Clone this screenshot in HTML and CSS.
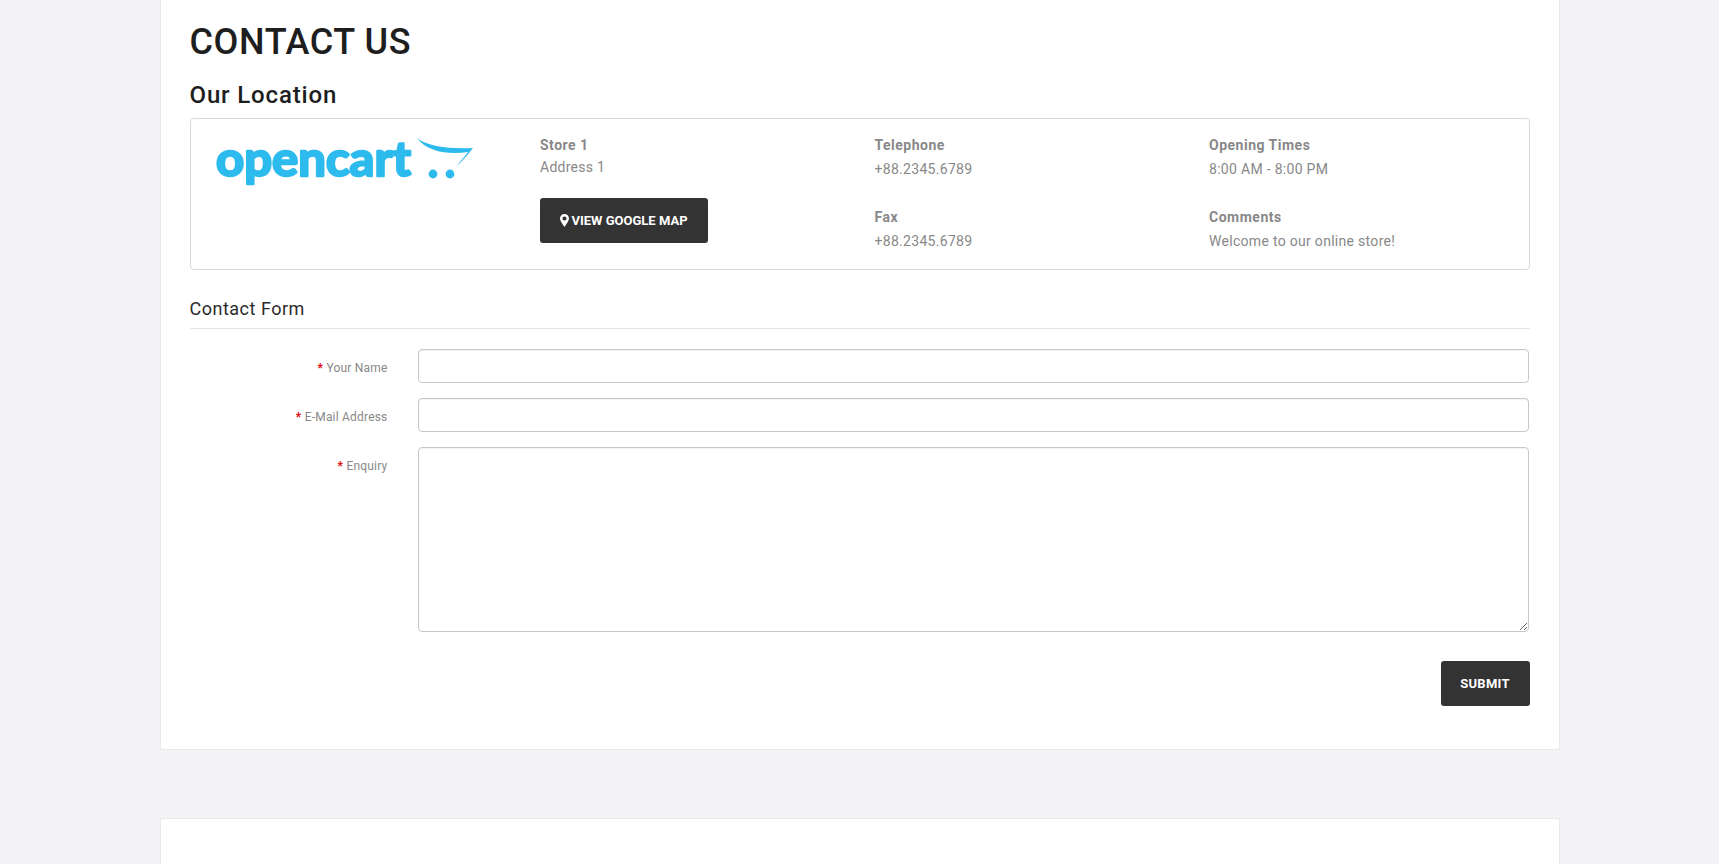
FILE: index.html
```html
<!DOCTYPE html>
<html lang="en">
<head>
    <meta charset="UTF-8">
    <meta name="viewport" content="width=device-width, initial-scale=1.0">
    <title>Contact Us</title>
    <link rel="stylesheet" href="styles.css">
</head>
<body>

    <div class="panel">
        <h1>CONTACT US</h1>
        <h2>Our Location</h2>

        <div class="location-card">
            <div class="loc-col loc-logo">
                <svg class="logo" width="268" height="62" viewBox="0 -10 268 62">
                    <text class="logo-text" x="10" y="38" textLength="195" lengthAdjust="spacingAndGlyphs">opencart</text>
                    <path class="logo-cart" d="M211 0 C222 9 245 11 267 10 C261 18 256 23 250 29 C256 21 260 17 262 14 C243 17 221 14 211 0 Z"/>
                    <circle class="logo-cart" cx="227" cy="36" r="4.4"/>
                    <circle class="logo-cart" cx="244" cy="36" r="4.4"/>
                </svg>
            </div>

            <div class="loc-col">
                <div class="loc-group">
                    <strong>Store 1</strong>
                    <div class="loc-address">Address 1</div>
                </div>
                <a class="btn btn-map" href="#">
                    <svg class="pin" width="9" height="13" viewBox="0 0 9 13">
                        <path fill-rule="evenodd" d="M4.5 0C2 0 0 2 0 4.5 0 6.6 2.9 10.6 4.5 13 6.1 10.6 9 6.6 9 4.5 9 2 7 0 4.5 0ZM4.5 2.4a2.1 2.1 0 1 1 0 4.2 2.1 2.1 0 0 1 0-4.2Z"/>
                    </svg>
                    VIEW GOOGLE MAP
                </a>
            </div>

            <div class="loc-col">
                <div class="loc-group">
                    <strong>Telephone</strong>
                    <div class="loc-value">+88.2345.6789</div>
                </div>
                <div class="loc-group">
                    <strong>Fax</strong>
                    <div class="loc-value">+88.2345.6789</div>
                </div>
            </div>

            <div class="loc-col">
                <div class="loc-group">
                    <strong>Opening Times</strong>
                    <div class="loc-value">8:00 AM - 8:00 PM</div>
                </div>
                <div class="loc-group">
                    <strong>Comments</strong>
                    <div class="loc-value">Welcome to our online store!</div>
                </div>
            </div>
        </div>

        <form class="contact-form">
            <div class="legend">Contact Form</div>

            <div class="form-row">
                <label for="name"><span class="req">*</span> Your Name</label>
                <input type="text" id="name">
            </div>
            <div class="form-row">
                <label for="email"><span class="req">*</span> E-Mail Address</label>
                <input type="text" id="email">
            </div>
            <div class="form-row">
                <label for="enquiry"><span class="req">*</span> Enquiry</label>
                <textarea id="enquiry"></textarea>
            </div>

            <div class="form-actions">
                <button type="button" class="btn btn-submit">SUBMIT</button>
            </div>
        </form>
    </div>

    <div class="panel panel-next"></div>

</body>
</html>
```

FILE: styles.css
```css
/* Global Style */
html, body {
    margin: 0;
    padding: 0;
}

body {
    font-family: Roboto, Arial, sans-serif;
    font-size: 14px;
    color: #888;
    background-color: #f3f3f8;
    overflow: hidden;
    height: 864px;
}

.panel {
    box-sizing: border-box;
    width: 1400px;
    margin: 0 auto;
    padding: 22px 29px 43px;
    background-color: #fff;
    border: 1px solid #e9e9ec;
    border-top: none;
}

.panel-next {
    height: 46px;
    margin-top: 68px;
    padding: 0;
    border-top: 1px solid #e9e9ec;
    border-bottom: none;
}

h1 {
    margin: 0;
    font-size: 36px;
    line-height: 40px;
    font-weight: 500;
    color: #1e1e1e;
    letter-spacing: 0.6px;
}

h2 {
    margin: 18px 0 8px;
    font-size: 24px;
    line-height: 30px;
    font-weight: 500;
    color: #1e1e1e;
    letter-spacing: 0.85px;
}

/* Location card */
.location-card {
    display: grid;
    grid-template-columns: repeat(4, 1fr);
    height: 152px;
    box-sizing: border-box;
    padding: 15px 0 0;
    border: 1px solid #d8d8db;
    border-radius: 4px;
}

.loc-col {
    padding: 0 15px;
}

.logo {
    display: block;
    margin-top: -6px;
}

.logo-text {
    font-family: Lato, sans-serif;
    font-size: 47px;
    font-weight: 700;
    fill: #2dbbee;
    stroke: #2dbbee;
    stroke-width: 2.4px;
    stroke-linejoin: round;
}

.logo-cart {
    fill: #2dbbee;
}

.loc-group {
    margin-bottom: 26px;
}

.loc-group strong {
    display: block;
    line-height: 22px;
    font-weight: 700;
    letter-spacing: 0.5px;
}

.loc-address {
    line-height: 22px;
    letter-spacing: 0.25px;
}

.loc-value {
    margin-top: 2px;
    line-height: 22px;
    letter-spacing: 0.3px;
}

.loc-group:has(.loc-address) {
    margin-bottom: 20px;
}

/* Buttons */
.btn {
    display: inline-flex;
    align-items: center;
    justify-content: center;
    box-sizing: border-box;
    height: 45px;
    background-color: #333;
    color: #fff;
    border: none;
    border-radius: 3px;
    font-family: Roboto, Arial, sans-serif;
    font-size: 13px;
    font-weight: 700;
    text-decoration: none;
    cursor: pointer;
}

.btn-map {
    width: 168px;
    gap: 2px;
}

.pin {
    fill: #fff;
}

.btn-submit {
    width: 89px;
    letter-spacing: 0.3px;
}

/* Contact form */
.contact-form {
    margin-top: 24px;
}

.legend {
    height: 34px;
    margin-bottom: 20px;
    border-bottom: 1px solid #e5e5e5;
    font-size: 18px;
    line-height: 29px;
    color: #2b2b2b;
    letter-spacing: 0.5px;
}

.form-row {
    display: flex;
    gap: 30px;
    margin-bottom: 15px;
}

.form-row label {
    flex: 0 0 198px;
    padding-top: 10px;
    text-align: right;
    font-size: 12px;
    line-height: 18px;
    color: #888;
    letter-spacing: 0.2px;
}

.req {
    color: #e00000;
    font-weight: 700;
}

.form-row input,
.form-row textarea {
    flex: 1;
    box-sizing: border-box;
    margin: 0 1px 0 0;
    background-color: #fff;
    border: 1px solid #c8c8c8;
    border-radius: 4px;
    box-shadow: inset 0 1px 1px rgba(0, 0, 0, 0.05);
}

.form-row input {
    height: 34px;
}

.form-row textarea {
    height: 185px;
}

.form-actions {
    display: flex;
    justify-content: flex-end;
    margin-top: 29px;
}
```
